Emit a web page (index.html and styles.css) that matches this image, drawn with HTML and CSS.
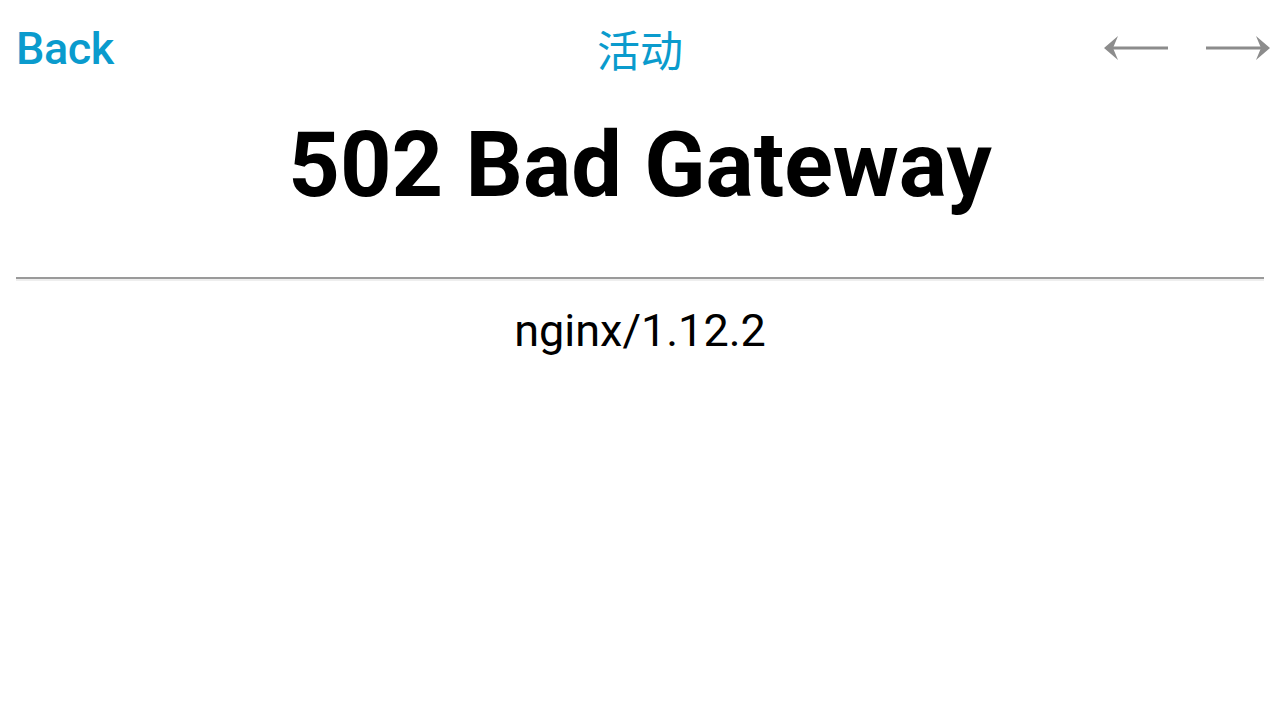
FILE: index.html
```html
<!DOCTYPE html>
<html>
<head>
<meta charset="utf-8">
<link rel="stylesheet" href="styles.css">
</head>
<body>
<header class="bar">
  <a class="back">Back</a>
  <div class="title">活动</div>
  <div class="nav">
    <svg class="arrow" width="66" height="30" viewBox="0 0 66 30"><path d="M64 15H8" stroke="#8c8c8c" stroke-width="3" fill="none"/><path d="M0 15L14 3L9 15L14 27Z" fill="#8c8c8c"/></svg>
    <svg class="arrow" width="66" height="30" viewBox="0 0 66 30"><path d="M2 15H58" stroke="#8c8c8c" stroke-width="3" fill="none"/><path d="M66 15L52 3L57 15L52 27Z" fill="#8c8c8c"/></svg>
  </div>
</header>
<main class="page">
  <h1 class="heading">502 Bad Gateway</h1>
  <hr class="rule">
  <p class="server">nginx/1.12.2</p>
</main>
</body>
</html>
```
FILE: styles.css
```css
html, body {
  margin: 0;
  padding: 0;
  background: #fff;
  font-family: Roboto, "Noto Sans CJK SC", sans-serif;
}
.bar {
  height: 96px;
  display: flex;
  align-items: center;
  justify-content: space-between;
  padding: 0 10px 0 16px;
  position: relative;
}
.back {
  color: #0a9bcd;
  font-size: 45px;
  font-weight: 500;
  letter-spacing: -0.5px;
}
.title {
  position: absolute;
  left: 0;
  right: 0;
  text-align: center;
  color: #0a9bcd;
  font-family: "Noto Sans CJK SC", sans-serif;
  font-size: 43px;
  pointer-events: none;
}
.nav {
  display: flex;
  gap: 34px;
  align-items: center;
}
.page {
  padding: 0 16px;
}
.heading {
  margin: 17px 0 0;
  text-align: center;
  font-size: 90px;
  font-weight: 700;
  line-height: 105px;
}
.rule {
  margin: 59px 0 0;
  height: 0;
  border: 0;
  border-top: 2px solid #9a9a9a;
  border-bottom: 2px solid #eeeeee;
}
.server {
  margin: 23px 0 0;
  text-align: center;
  font-size: 45px;
  line-height: 53px;
}
```
